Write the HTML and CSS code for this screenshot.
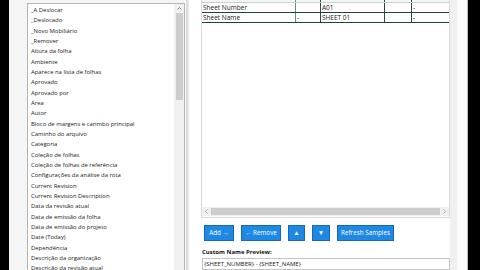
FILE: index.html
```html
<!DOCTYPE html>
<html>
<head>
<meta charset="utf-8">
<link rel="stylesheet" href="styles.css">
</head>
<body>
<div class="screen">
  <div class="edge-left"></div>
  <div class="left-pane">
    <div class="listbox">
      <div class="items">
        <div class="item">_A Deslocar</div>
        <div class="item">_Deslocado</div>
        <div class="item">_Novo Mobiliário</div>
        <div class="item">_Remover</div>
        <div class="item">Altura da folha</div>
        <div class="item">Ambiente</div>
        <div class="item">Aparece na lista de folhas</div>
        <div class="item">Aprovado</div>
        <div class="item">Aprovado por</div>
        <div class="item">Área</div>
        <div class="item">Autor</div>
        <div class="item">Bloco de margens e carimbo principal</div>
        <div class="item">Caminho do arquivo</div>
        <div class="item">Categoria</div>
        <div class="item">Coleção de folhas</div>
        <div class="item">Coleção de folhas de referência</div>
        <div class="item">Configurações da análise da rota</div>
        <div class="item">Current Revision</div>
        <div class="item">Current Revision Description</div>
        <div class="item">Data da revisão atual</div>
        <div class="item">Data de emissão da folha</div>
        <div class="item">Data de emissão do projeto</div>
        <div class="item">Date (Today)</div>
        <div class="item">Dependência</div>
        <div class="item">Descrição da organização</div>
        <div class="item">Descrição da revisão atual</div>
      </div>
      <div class="vscroll">
        <div class="arrow-up">
          <svg width="5" height="3" viewBox="0 0 5 3"><path d="M0.5 2.5 L2.5 0.5 L4.5 2.5" fill="none" stroke="#606060" stroke-width="0.7"/></svg>
        </div>
        <div class="vthumb"></div>
      </div>
    </div>
  </div>
  <div class="splitter"><div class="split-line"></div></div>
  <div class="right-pane">
    <div class="grid-panel">
      <div class="grid-area">
        <table class="grid">
          <tr class="head"><td></td><td></td><td></td><td></td><td></td></tr>
          <tr class="r1"><td>Sheet Number</td><td></td><td>A01</td><td></td><td>-</td></tr>
          <tr class="r2"><td>Sheet Name</td><td>-</td><td>SHEET 01</td><td></td><td>-</td></tr>
        </table>
      </div>
      <div class="hscroll">
        <div class="harrow">
          <svg width="3" height="5" viewBox="0 0 3 5"><path d="M2.5 0.5 L0.5 2.5 L2.5 4.5" fill="none" stroke="#909090" stroke-width="0.7"/></svg>
        </div>
        <div class="hthumb"></div>
        <div class="harrow">
          <svg width="3" height="5" viewBox="0 0 3 5"><path d="M0.5 0.5 L2.5 2.5 L0.5 4.5" fill="none" stroke="#909090" stroke-width="0.7"/></svg>
        </div>
      </div>
    </div>
    <div class="buttons">
      <div class="btn b-add">Add →</div>
      <div class="btn b-remove">← Remove</div>
      <div class="btn b-up">▲</div>
      <div class="btn b-down">▼</div>
      <div class="btn b-refresh">Refresh Samples</div>
    </div>
    <div class="label">Custom Name Preview:</div>
    <div class="preview">{SHEET_NUMBER} - {SHEET_NAME}</div>
  </div>
  <div class="right-margin"><div class="rm-white"></div><div class="rm-line"></div></div>
  <div class="edge-right"></div>
</div>
</body>
</html>
```

FILE: styles.css
```css
html, body {
  margin: 0;
  padding: 0;
  width: 480px;
  height: 270px;
  overflow: hidden;
  background: #f3f3f3;
  font-family: "Open Sans", "Noto Sans", sans-serif;
  color: #1a1a1a;
}
.screen {
  display: flex;
  width: 480px;
  height: 270px;
}
.edge-left {
  width: 9px;
  background: #000;
}
.left-pane {
  width: 176px;
  padding: 3px 0 0 18px;
  box-sizing: border-box;
  background: #f5f5f5;
}
.listbox {
  display: flex;
  width: 158px;
  height: 290px;
  background: #fff;
  border: 1px solid #b4b4b4;
  box-sizing: border-box;
}
.items {
  flex: 1;
  padding: 1px 0 0 3px;
}
.item {
  height: 10.33px;
  line-height: 10.33px;
  font-size: 5.9px;
  white-space: nowrap;
}
.vscroll {
  width: 10px;
  background: #f0f0f0;
  display: flex;
  flex-direction: column;
  align-items: center;
}
.arrow-up {
  height: 9px;
  display: flex;
  align-items: center;
  justify-content: center;
}
.vthumb {
  width: 7px;
  height: 87px;
  background: #cdcdcd;
}
.splitter {
  width: 16px;
  background: #fff;
  display: flex;
}
.split-line {
  width: 2px;
  margin-left: 1px;
  background: #e4e4e4;
  border-left: 1px solid #d4d4d4;
}
.right-pane {
  width: 249px;
  display: flex;
  flex-direction: column;
  background: #fff;
}
.grid-panel {
  height: 218px;
  border: 1px solid #dadada;
  border-top: none;
  box-sizing: border-box;
  display: flex;
  flex-direction: column;
  overflow: hidden;
}
.grid-area {
  flex: 1;
  overflow: hidden;
}
.grid {
  border-collapse: collapse;
  margin-top: -7px;
  width: 248px;
  table-layout: fixed;
  font-size: 6.5px;
}
.grid td {
  padding: 0 0 0 1px;
  height: 9px;
  line-height: 9px;
  white-space: nowrap;
  overflow: hidden;
  border-left: 1px solid #2b4a3c;
  vertical-align: middle;
}
.grid td:first-child { width: 92px; border-left: none; }
.grid td:nth-child(2) { width: 23px; border-left-color: #6f8a7e; }
.grid td:nth-child(3) { width: 62px; }
.grid td:nth-child(4) { width: 25px; }
.grid tr.head td { background: #f4f6f5; border-bottom: 1px solid #c9d2ce; }
.grid tr.r1 td { border-bottom: 1px solid #1d4434; }
.grid tr.r2 td { border-bottom: 1px solid #1d4434; box-shadow: 0 1px 0 #c8cfcc; }
.hscroll {
  height: 9px;
  margin-bottom: 1px;
  background: #f0f0f0;
  display: flex;
  align-items: center;
}
.harrow {
  width: 9px;
  display: flex;
  justify-content: center;
  align-items: center;
}
.hthumb {
  flex: 1;
  height: 7px;
  background: #cdcdcd;
}
.buttons {
  display: flex;
  gap: 7px;
  padding: 7px 0 0 3px;
  height: 23px;
  box-sizing: border-box;
}
.btn {
  height: 16px;
  box-sizing: border-box;
  background: #1e88e5;
  border: 1px solid #1769b8;
  color: #fff;
  font-size: 6.3px;
  line-height: 14px;
  text-align: center;
  white-space: nowrap;
}
.b-add { width: 30px; }
.b-remove { width: 40px; }
.b-up { width: 17px; font-size: 6.5px; }
.b-down { width: 18px; font-size: 6.5px; }
.b-refresh { width: 57px; }
.label {
  margin: 7px 0 0 1px;
  font-size: 6px;
  font-weight: bold;
  line-height: 8px;
  color: #111;
}
.preview {
  margin: 2px 0 0 1px;
  height: 12px;
  border: 1px solid #c4c4c4;
  box-sizing: border-box;
  font-size: 6px;
  line-height: 10px;
  padding-left: 1px;
  white-space: nowrap;
}
.right-margin {
  width: 18px;
  display: flex;
  background: #f0f0f0;
}
.rm-white {
  width: 10px;
  margin-left: 7px;
  background: #fbfbfb;
}
.rm-line {
  width: 1px;
  background: #b8b8b8;
}
.edge-right {
  width: 12px;
  background: #000;
}
```
